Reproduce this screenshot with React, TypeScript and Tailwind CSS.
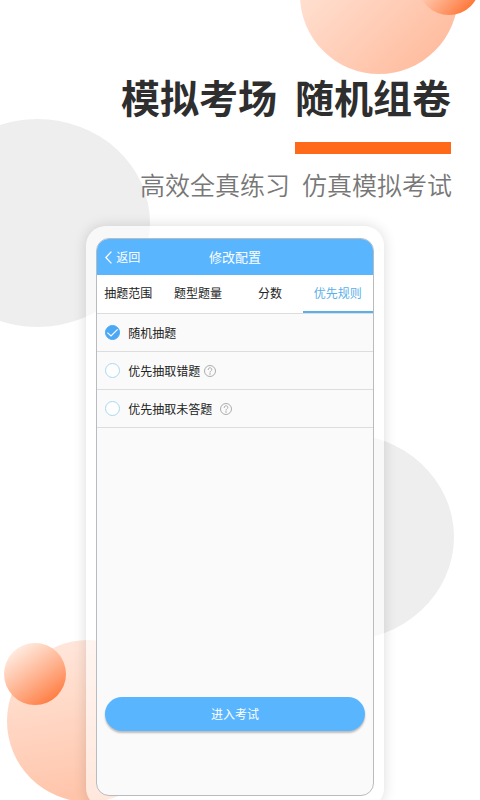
import { useState } from "react";

const tabs = ["抽题范围", "题型题量", "分数", "优先规则"];

const rules = [
  { id: "random", label: "随机抽题", help: "" },
  { id: "wrong", label: "优先抽取错题", help: "gap-1" },
  { id: "unanswered", label: "优先抽取未答题", help: "gap-2" },
];

function Backdrop() {
  return (
    <div className="absolute inset-0 -z-10" aria-hidden="true">
      <div className="absolute -left-[75px] top-[119px] h-[208px] w-[225px] rounded-[50%] bg-[#eeeeee]" />
      <div className="absolute right-[26px] top-[433px] h-[208px] w-[225px] rounded-[50%] bg-[#eeeeee]" />
      <div className="absolute -top-[84px] right-[22px] size-[158px] rounded-full bg-linear-135 from-[#ffeee5] to-[#ffb595]" />
      <div className="absolute -top-[47px] right-0 size-[62px] rounded-full bg-linear-135 from-[#fff0e8] from-15% to-[#ff6f24] to-90%" />
      <div className="absolute left-[7px] top-[640px] size-[162px] rounded-full bg-linear-170 from-[#ffe9de] to-[#ffc0a4]" />
      <div className="absolute left-1 top-[643px] size-[62px] rounded-full bg-linear-145 from-[#fff0e8] from-10% to-[#ff6f24] to-95%" />
    </div>
  );
}

function HelpIcon() {
  return (
    <svg width="12" height="12" viewBox="0 0 12 12" fill="none" stroke="#999999" strokeWidth="0.8">
      <circle cx="6" cy="6" r="5.5" />
      <path d="M4.2 4.6C4.2 3.5 5 2.8 6 2.8s1.8.7 1.8 1.7c0 1.3-1.8 1.4-1.8 2.7" strokeLinecap="round" />
      <circle cx="6" cy="9" r="0.3" fill="#999999" />
    </svg>
  );
}

export default function App() {
  const [tab, setTab] = useState("优先规则");
  const [rule, setRule] = useState("random");

  return (
    <main className="relative isolate h-screen overflow-hidden bg-white font-['Noto_Sans_CJK_SC',sans-serif]">
      <Backdrop />

      <header className="flex flex-col items-end pr-7 pt-[70px]">
        <h1 className="mr-px flex gap-[18px] text-[39px] font-bold leading-[52px] text-[#2e2e2e]">
          <span>模拟考场</span>
          <span>随机组卷</span>
        </h1>
        <div className="mr-px mt-5 h-3 w-[156px] bg-[#ff6a1a]" />
        <p className="mt-3.5 flex gap-3 text-[25px] font-[350] leading-8 text-[#777777]">
          <span>高效全真练习</span>
          <span>仿真模拟考试</span>
        </p>
      </header>

      <section className="mx-auto mt-[26px] w-[62%] -translate-x-[5px] rounded-[20px] bg-white/60 px-2.5 py-3 shadow-[0_0_14px_rgba(0,0,0,0.14)]">
        <div className="flex min-h-[558px] flex-col overflow-hidden rounded-[13px] border border-[#b8bcc0] bg-[#fafafa] text-xs text-[#222222]">
          <div className="grid h-9 shrink-0 grid-cols-[1fr_auto_1fr] items-center bg-[#5ab5ff] px-2 text-white">
            <button type="button" className="flex items-center gap-1 justify-self-start">
              <svg width="7" height="13" viewBox="0 0 7 13" fill="none" stroke="currentColor" strokeWidth="1.3">
                <path d="M6.4.6.8 6.5l5.6 5.9" />
              </svg>
              返回
            </button>
            <h2 className="text-[13px]">修改配置</h2>
          </div>

          <nav className="grid h-[39px] shrink-0 grid-cols-[62fr_78fr_66fr_70fr] border-b border-[#dddddd] bg-white">
            {tabs.map((name) => (
              <button
                key={name}
                type="button"
                onClick={() => setTab(name)}
                className={
                  tab === name
                    ? "border-b-2 border-[#5ab0ea] text-[#5ab0ea]"
                    : "border-b-2 border-transparent"
                }
              >
                {name}
              </button>
            ))}
          </nav>

          <div className="flex flex-col">
            {rules.map((item) => (
              <div
                key={item.id}
                className={`flex h-[38px] items-center border-b border-[#dddddd] px-2 ${item.help}`}
              >
                <label className="flex items-center gap-2">
                  <span className="grid place-items-center">
                    <input
                      type="radio"
                      name="rule"
                      checked={rule === item.id}
                      onChange={() => setRule(item.id)}
                      className="peer col-start-1 row-start-1 size-[15px] appearance-none rounded-full border border-[#a9d8f5] bg-white checked:border-[#4aa8f5] checked:bg-[#4aa8f5]"
                    />
                    <svg
                      className="pointer-events-none invisible col-start-1 row-start-1 peer-checked:visible"
                      width="15"
                      height="15"
                      viewBox="0 0 15 15"
                      fill="none"
                      stroke="#ffffff"
                      strokeWidth="1.2"
                    >
                      <path d="M2.4 7.6 6 10.9l6.6-6.6" />
                    </svg>
                  </span>
                  {item.label}
                </label>
                {item.help && (
                  <button type="button" aria-label="说明">
                    <HelpIcon />
                  </button>
                )}
              </div>
            ))}
          </div>

          <button
            type="button"
            className="mx-2 mb-16 mt-auto h-[34px] rounded-full bg-[#5ab5ff] text-white shadow-[0_2px_2px_rgba(0,0,0,0.25)]"
          >
            进入考试
          </button>
        </div>
      </section>
    </main>
  );
}
